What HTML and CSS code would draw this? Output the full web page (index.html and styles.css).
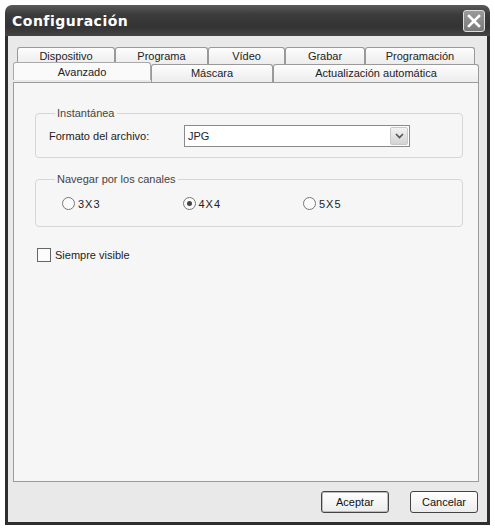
FILE: index.html
```html
<!DOCTYPE html>
<html>

<head>
    <title>Configuración</title>
    <link rel="stylesheet" href="styles.css">
</head>

<body>
    <div class="window">
        <div class="titlebar">
            <span class="title">Configuración</span>
            <button class="close" aria-label="Cerrar">
                <svg width="14" height="14" viewBox="0 0 14 14">
                    <path d="M2 2 L12 12 M12 2 L2 12" stroke="#fff" stroke-width="2.6" stroke-linecap="square"/>
                </svg>
            </button>
        </div>
        <div class="frame">
            <div class="tabs">
                <div class="tab-row back">
                    <div class="tab" style="width: 98px">Dispositivo</div>
                    <div class="tab" style="width: 93px">Programa</div>
                    <div class="tab" style="width: 77px">Vídeo</div>
                    <div class="tab" style="width: 80px">Grabar</div>
                    <div class="tab" style="width: 110px">Programación</div>
                </div>
                <div class="tab-row front">
                    <div class="tab active" style="width: 138px">Avanzado</div>
                    <div class="tab" style="width: 122px">Máscara</div>
                    <div class="tab" style="width: 206px">Actualización automática</div>
                </div>
            </div>
            <div class="panel">
                <fieldset class="group">
                    <legend>Instantánea</legend>
                    <div class="field">
                        <label>Formato del archivo:</label>
                        <div class="select">
                            <span>JPG</span>
                            <span class="arrow">
                                <svg width="9" height="6" viewBox="0 0 9 6">
                                    <path d="M1 1 L4.5 4.5 L8 1" stroke="#555" stroke-width="1.6" fill="none"/>
                                </svg>
                            </span>
                        </div>
                    </div>
                </fieldset>
                <fieldset class="group channels">
                    <legend>Navegar por los canales</legend>
                    <div class="radios">
                        <label class="radio"><span class="dot"></span>3X3</label>
                        <label class="radio"><span class="dot checked"></span>4X4</label>
                        <label class="radio"><span class="dot"></span>5X5</label>
                    </div>
                </fieldset>
                <label class="check"><span class="box"></span>Siempre visible</label>
            </div>
            <div class="buttons">
                <button class="btn default">Aceptar</button>
                <button class="btn">Cancelar</button>
            </div>
        </div>
    </div>
</body>

</html>
```

FILE: styles.css
```css
body {
    margin: 0;
    background: #fff;
    font-family: "Liberation Sans", Arial, sans-serif;
    font-size: 11px;
    color: #222;
}

.window {
    margin: 5px 0 0 5px;
    width: 485px;
    height: 520px;
    display: flex;
    flex-direction: column;
}

.titlebar {
    height: 31px;
    border-radius: 7px 7px 0 0;
    background: linear-gradient(#5a5a5a, #3c3c3c 30%, #333 70%, #444);
    display: flex;
    align-items: center;
    justify-content: space-between;
    padding: 0 5px 0 7px;
}

.title {
    color: #fff;
    font-family: "DejaVu Sans", sans-serif;
    font-weight: bold;
    font-size: 14px;
    letter-spacing: 0.5px;
}

.close {
    width: 22px;
    height: 22px;
    border: 1px solid #ddd;
    border-radius: 3px;
    background: linear-gradient(#9a9a9a, #7a7a7a);
    padding: 0;
    display: flex;
    align-items: center;
    justify-content: center;
}

.frame {
    flex: 1;
    background: #e9e9e9;
    border: 3px solid #2e2e2e;
    border-top: none;
    padding: 11px 8px 9px 5px;
    display: flex;
    flex-direction: column;
}

.tabs {
    position: relative;
    z-index: 1;
}

.tab-row {
    display: flex;
}

.tab-row.back {
    padding-left: 4px;
}

.tab {
    height: 17px;
    box-sizing: border-box;
    border: 1px solid #999;
    border-bottom: none;
    border-radius: 3px 3px 0 0;
    background: linear-gradient(#fdfdfd, #ececec);
    text-align: center;
    line-height: 16px;
    color: #222;
}

.tab-row.front .tab {
    height: 18px;
}

.tab.active {
    background: #fafafa;
    height: 20px;
    margin-top: -2px;
    margin-bottom: -1px;
    line-height: 18px;
    border-color: #aaa;
}

.panel {
    flex: 1;
    background: #f6f6f6;
    border: 1px solid #9c9c9c;
    padding: 24px 15px 0 21px;
}

.group {
    margin: 0;
    border: 1px solid #d6d6d6;
    border-radius: 4px;
    padding: 6px 10px 10px 13px;
}

.group legend {
    padding: 0 2px;
    margin-left: 6px;
    color: #444;
}

.field {
    display: flex;
    align-items: center;
}

.field label {
    width: 135px;
}

.select {
    width: 226px;
    height: 22px;
    box-sizing: border-box;
    border: 1px solid #8a8a8a;
    background: #fff;
    display: flex;
    align-items: center;
    justify-content: space-between;
    padding-left: 3px;
}

.arrow {
    width: 18px;
    height: 18px;
    margin-right: 1px;
    background: linear-gradient(#f2f2f2, #d4d4d4);
    border: 1px solid #c8c8c8;
    box-sizing: border-box;
    border-radius: 2px;
    display: flex;
    align-items: center;
    justify-content: center;
}

.channels {
    margin-top: 15px;
    padding: 12px 10px 16px 13px;
}

.radios {
    display: flex;
    padding-left: 13px;
}

.radio {
    display: flex;
    align-items: center;
    gap: 3px;
    width: 120.5px;
    letter-spacing: 1px;
}

.dot {
    width: 13px;
    height: 13px;
    box-sizing: border-box;
    border: 1px solid #777;
    border-radius: 50%;
    background: #fbfbfb;
    display: flex;
    align-items: center;
    justify-content: center;
}

.dot.checked::after {
    content: "";
    width: 5px;
    height: 5px;
    border-radius: 50%;
    background: #444;
}

.check {
    display: flex;
    align-items: center;
    gap: 4px;
    margin-top: 21px;
    margin-left: 2px;
}

.box {
    width: 14px;
    height: 14px;
    box-sizing: border-box;
    border: 1px solid #666;
    background: #fcfcfc;
}

.buttons {
    display: flex;
    justify-content: flex-end;
    gap: 21px;
    padding-top: 9px;
    padding-right: 1px;
}

.btn {
    width: 68px;
    height: 22px;
    border: 1px solid #444;
    border-radius: 3px;
    background: linear-gradient(#fff, #ececec);
    font-family: "Liberation Sans", Arial, sans-serif;
    font-size: 11px;
    color: #111;
    padding: 0;
}

.btn.default {
    box-shadow: inset 0 0 0 1px #bbb;
}
```
